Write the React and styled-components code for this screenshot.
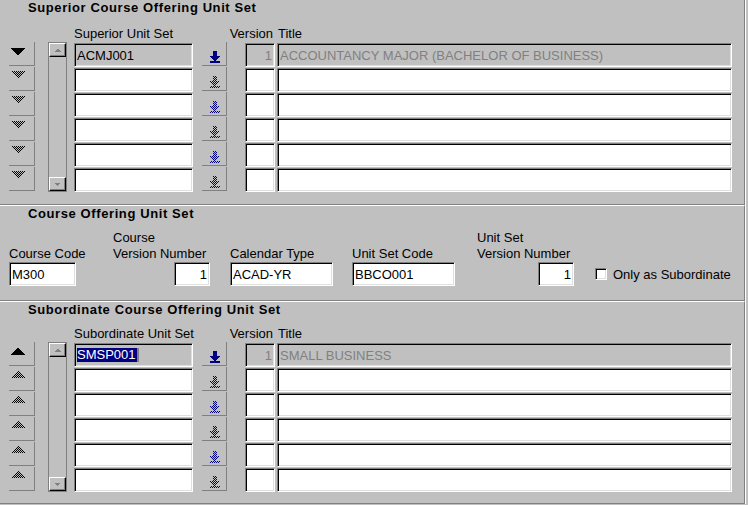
import React from "react"
import styled, { createGlobalStyle } from "styled-components"

const GlobalStyle = createGlobalStyle`
  html, body {
    margin: 0;
    padding: 0;
    background: #c0c0c0;
  }
  body {
    font-family: "Liberation Sans", Arial, sans-serif;
    font-size: 13px;
    color: #000;
  }
`

const Window = styled.div`
  width: 748px;
  height: 505px;
  overflow: hidden;
  background: #c0c0c0;
`
const Section = styled.section`
  width: 744px;
  border-right: 1px solid #808080;
  border-bottom: 1px solid #808080;
  border-top: ${p => (p.$first ? "0" : "1px solid #fff")};
  box-shadow: 1px 0 0 #fff;
  padding-bottom: ${p => p.$padBottom}px;
`
const SectionTitle = styled.div`
  padding-left: 28px;
  height: 16px;
  line-height: 16px;
  font-weight: bold;
  letter-spacing: 0.6px;
  white-space: nowrap;
`

// multi-record block
const Block = styled.div`
  display: flex;
  align-items: flex-start;
  padding-left: 9px;
  margin-top: ${p => p.$offset}px;
`
const NavColumn = styled.div`
  display: flex;
  flex-direction: column;
  padding-top: 16px;
  width: 26px;
`
const NavButton = styled.div`
  box-sizing: border-box;
  height: 24px;
  margin-bottom: 1px;
  padding: ${p => (p.$current ? 6 : 4)}px 0 0 ${p => (p.$current ? 2 : 3)}px;
  border-right: 1px solid #808080;
  border-bottom: 1px solid #808080;
  svg {
    display: block;
  }
`
const ScrollTrack = styled.div`
  box-sizing: border-box;
  margin: 16px 0 0 13px;
  width: 19px;
  height: 150px;
  border: 1px solid #808080;
  display: flex;
  flex-direction: column;
  justify-content: space-between;
  background: #c0c0c0;
`
const ScrollButton = styled.div`
  box-sizing: border-box;
  height: 14px;
  border: 1px solid;
  border-color: #fff #000 #000 #fff;
  box-shadow: inset -1px -1px 0 #808080;
  display: flex;
  align-items: center;
  justify-content: center;
  padding-right: 1px;
`
const Table = styled.div`
  margin-left: 7px;
`
const HeaderRow = styled.div`
  display: flex;
  height: 16px;
  line-height: 16px;
  white-space: nowrap;
`
const HeaderCell = styled.div`
  width: ${p => p.$w}px;
  margin-left: ${p => p.$ml || 0}px;
  text-align: ${p => p.$align || "left"};
  padding-right: ${p => (p.$align === "right" ? 2 : 0)}px;
  box-sizing: border-box;
`
const DataRow = styled.div`
  display: flex;
  height: 25px;
`
const Field = styled.div`
  box-sizing: border-box;
  width: ${p => p.$w}px;
  height: 24px;
  margin-top: ${p => (p.$flush ? 0 : 1)}px;
  margin-left: ${p => p.$ml || 0}px;
  padding: 0 2px;
  background: ${p => (p.$gray ? "#c0c0c0" : "#fff")};
  color: ${p => (p.$muted ? "#808080" : "#000")};
  border: 1px solid;
  border-color: #808080 #fff #fff #808080;
  box-shadow: inset 1px 1px 0 #000, inset -1px -1px 0 #dfdfdf;
  display: flex;
  align-items: center;
  justify-content: ${p => (p.$right ? "flex-end" : "flex-start")};
  white-space: nowrap;
  overflow: hidden;
`
const Selected = styled.span`
  display: inline-block;
  background: #000080;
  color: #fff;
  line-height: 14px;
  padding-right: 1px;
`
const Caret = styled.span`
  display: inline-block;
  width: 2px;
  height: 14px;
  background: #808080;
`
const LovButton = styled.div`
  box-sizing: border-box;
  width: 25px;
  height: 24px;
  margin: 0 18px 0 9px;
  padding: 9px 0 0 7px;
  border-right: 1px solid #808080;
  border-bottom: 1px solid #808080;
  svg {
    display: block;
  }
`

// single-record form
const FormGrid = styled.div`
  display: grid;
  grid-template-columns: 104px 117px 122px 125px 118px 1fr;
  align-items: end;
  padding-left: 9px;
  margin-top: 8px;
`
const FieldGroup = styled.div`
  display: flex;
  flex-direction: column;
  align-items: ${p => (p.$right ? "flex-end" : "flex-start")};
  width: ${p => p.$w}px;
`
const Label = styled.div`
  align-self: stretch;
  line-height: 16px;
  white-space: nowrap;
`
const CheckRow = styled.label`
  display: flex;
  align-items: center;
  height: 24px;
  white-space: nowrap;
`
const CheckBox = styled.span`
  box-sizing: border-box;
  width: 12px;
  height: 12px;
  margin-right: 6px;
  background: #fff;
  border: 1px solid;
  border-color: #808080 #fff #fff #808080;
  box-shadow: inset 1px 1px 0 #000, inset -1px -1px 0 #dfdfdf;
`

// pixel-art icon: one rect per lit pixel, checkered when dithered
const PixelIcon = ({ w, h, mask, color, dither }) => {
  const px = []
  for (let y = 0; y < h; y++) {
    for (let x = 0; x < w; x++) {
      if (!mask(x, y)) continue
      if (dither && (x + y) % 2 === 1) continue
      px.push(<rect key={`${x}-${y}`} x={x} y={y} width="1" height="1" />)
    }
  }
  return (
    <svg width={w} height={h} fill={color} shapeRendering="crispEdges">
      {px}
    </svg>
  )
}

const downTriangle = (x, y) => x >= y && x <= 13 - y
const upTriangle = (x, y) => downTriangle(x, 6 - y)

const lovArrow = (x, y) => {
  if (y <= 4) return x >= 4 && x <= 7
  if (y <= 9) return x >= y - 4 && x <= 15 - y
  return x >= 1 && x <= 10
}

const NavArrow = ({ up, solid }) => (
  <PixelIcon w={14} h={7} mask={up ? upTriangle : downTriangle} color="#000" dither={!solid} />
)

const LovIcon = ({ solid }) => (
  <PixelIcon w={12} h={12} mask={lovArrow} color="#000080" dither={!solid} />
)

const ScrollArrow = ({ up }) => (
  <svg width="7" height="5" shapeRendering="crispEdges">
    <polygon points={up ? "0,4 7,4 3.5,0.5" : "0,0.5 7,0.5 3.5,4"} fill="#808080" />
  </svg>
)

const UnitSetBlock = ({ label, rows, up, offset }) => (
  <Block $offset={offset}>
    <NavColumn>
      {rows.map((r, i) => (
        <NavButton key={i} $current={i === 0}>
          <NavArrow up={up} solid={i === 0} />
        </NavButton>
      ))}
    </NavColumn>
    <ScrollTrack>
      <ScrollButton>
        <ScrollArrow up />
      </ScrollButton>
      <ScrollButton>
        <ScrollArrow />
      </ScrollButton>
    </ScrollTrack>
    <Table>
      <HeaderRow>
        <HeaderCell $w={154}>{label}</HeaderCell>
        <HeaderCell $w={47} $align="right">Version</HeaderCell>
        <HeaderCell $w={100} $ml={3}>Title</HeaderCell>
      </HeaderRow>
      {rows.map((r, i) => (
        <DataRow key={i}>
          <Field $w={119} $gray={i === 0}>
            {r.selected ? (
              <>
                <Selected>{r.code}</Selected>
                <Caret />
              </>
            ) : (
              r.code
            )}
          </Field>
          <LovButton>
            <LovIcon solid={i === 0} />
          </LovButton>
          <Field $w={30} $gray={i === 0} $muted $right>
            {r.version}
          </Field>
          <Field $w={455} $ml={2} $gray={i === 0} $muted>
            {r.title}
          </Field>
        </DataRow>
      ))}
    </Table>
  </Block>
)

const superiorRows = [
  { code: "ACMJ001", version: "1", title: "ACCOUNTANCY MAJOR (BACHELOR OF BUSINESS)" },
  {},
  {},
  {},
  {},
  {},
]

const subordinateRows = [
  { code: "SMSP001", version: "1", title: "SMALL BUSINESS", selected: true },
  {},
  {},
  {},
  {},
  {},
]

const App = () => (
  <Window>
    <GlobalStyle />
    <Section $first $padBottom={12}>
      <SectionTitle>Superior Course Offering Unit Set</SectionTitle>
      <UnitSetBlock label="Superior Unit Set" rows={superiorRows} offset={10} />
    </Section>

    <Section $padBottom={14}>
      <SectionTitle>Course Offering Unit Set</SectionTitle>
      <FormGrid>
        <FieldGroup $w={80}>
          <Label>Course Code</Label>
          <Field $w={67} $flush>M300</Field>
        </FieldGroup>
        <FieldGroup $w={97} $right>
          <Label>
            Course
            <br />
            Version Number
          </Label>
          <Field $w={36} $flush $right>1</Field>
        </FieldGroup>
        <FieldGroup $w={103}>
          <Label>Calendar Type</Label>
          <Field $w={103} $flush>ACAD-YR</Field>
        </FieldGroup>
        <FieldGroup $w={103}>
          <Label>Unit Set Code</Label>
          <Field $w={103} $flush>BBCO001</Field>
        </FieldGroup>
        <FieldGroup $w={97} $right>
          <Label>
            Unit Set
            <br />
            Version Number
          </Label>
          <Field $w={36} $flush $right>1</Field>
        </FieldGroup>
        <CheckRow>
          <CheckBox />
          Only as Subordinate
        </CheckRow>
      </FormGrid>
    </Section>

    <Section $padBottom={11}>
      <SectionTitle>Subordinate Course Offering Unit Set</SectionTitle>
      <UnitSetBlock label="Subordinate Unit Set" rows={subordinateRows} up offset={8} />
    </Section>
  </Window>
)

export default App
